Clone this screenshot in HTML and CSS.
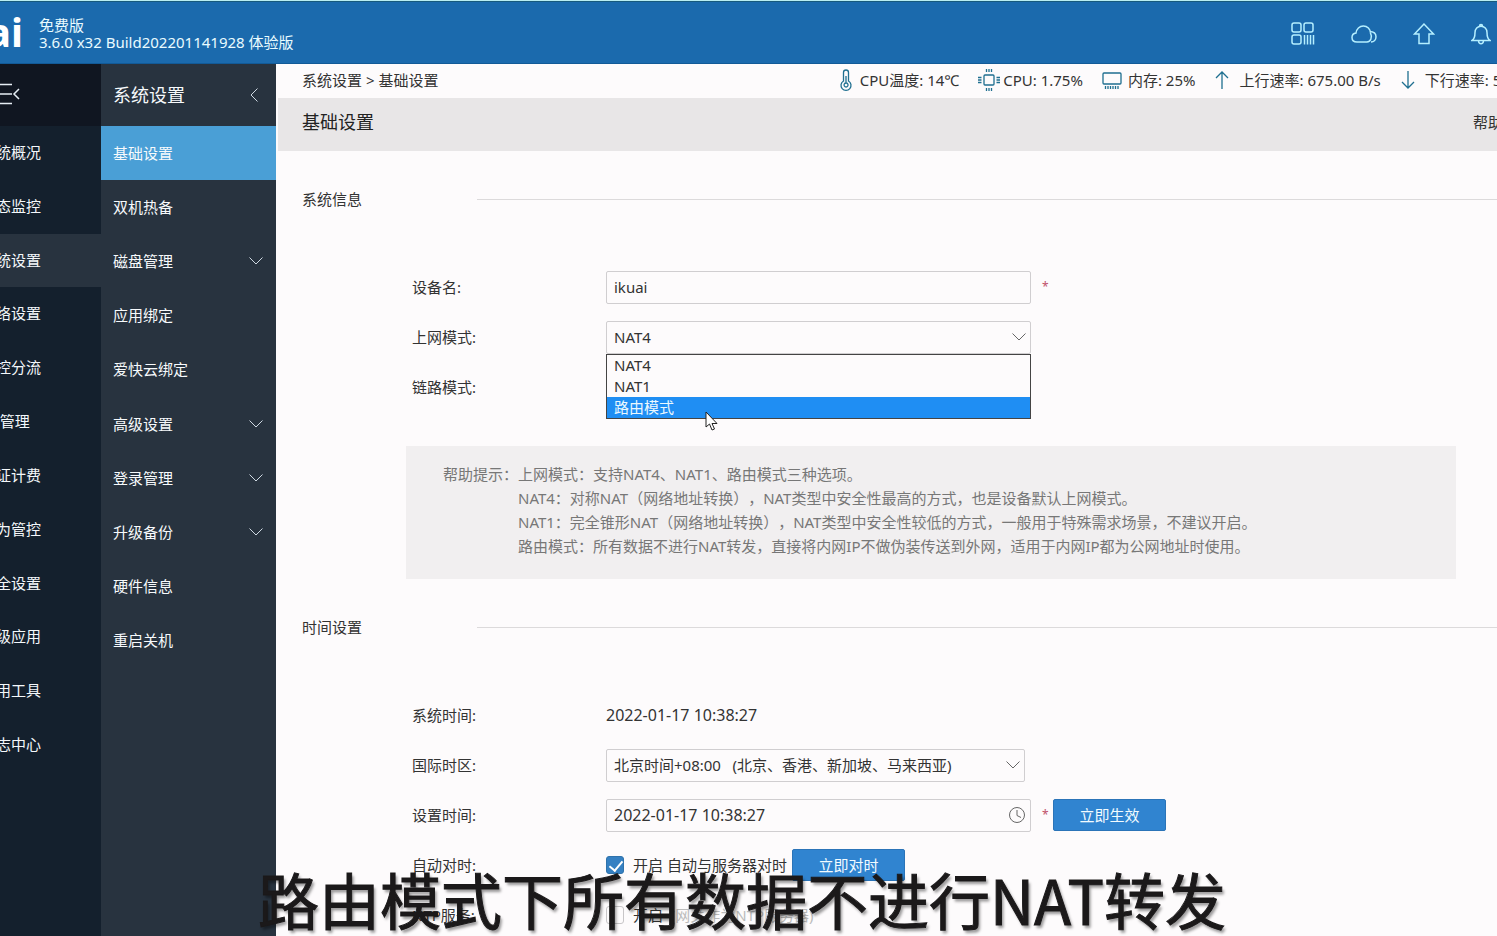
FILE: index.html
```
<!DOCTYPE html>
<html lang="zh-CN">
<head>
<meta charset="utf-8">
<title>基础设置</title>
<link rel="stylesheet" href="styles.css">
</head>
<body>
<header class="topbar">
  <div class="brand">
    <span class="logo">ikuai</span>
    <div class="version"><div>免费版</div><div>3.6.0 x32 Build202201141928 体验版</div></div>
  </div>
  <div class="tools">
    <button class="tool" aria-label="应用"><svg width="24" height="24" viewBox="0 0 24 24"><rect x="1" y="1" width="9" height="9" rx="2"/><rect x="13" y="1" width="9" height="9" rx="2"/><rect x="1" y="13" width="9" height="9" rx="2"/><path d="M13.500 13v9.500M16.500 13v9.500M19.500 13v9.500M22.500 13v9.500"/></svg></button>
    <button class="tool" aria-label="云"><svg width="26" height="24" viewBox="0 0 26 24"><path d="M6 20c-3 0-5-1.800-5-4.500 0-2.400 1.700-4.200 4-4.500C5.500 7 8.500 4 12.300 4c4 0 7.200 3 7.200 7.200 2 3.800.3 8.800-3.500 8.800zM18.500 9.500c4 0 6.500 2 6.500 5.300 0 3-2 5.200-5 5.200"/></svg></button>
    <button class="tool" aria-label="升级"><svg width="22" height="24" viewBox="0 0 22 24"><path d="M11 2 1.500 12H6v9.500h10V12h4.500z"/></svg></button>
    <button class="tool" aria-label="通知"><svg width="20" height="24" viewBox="0 0 20 24"><path d="M8.500 4a1.500 1.500 0 1 1 3 0M1 18.500c2.500-1.500 3-4 3-8C4 7 6.500 4.300 10 4.300S16 7 16 10.500c0 4 .5 6.500 3 8zM7.500 19c.3 3.600 4.700 3.600 5 0"/></svg></button>
  </div>
</header>
<div class="shell">
  <nav class="mainnav" aria-label="主菜单">
    <button class="collapse" aria-label="收起菜单"><svg width="30" height="22" viewBox="0 0 30 22"><path d="M0 1.500h22M0 11h22M0 20.500h22M29 6l-5 5 5 5"/></svg></button>
    <ul class="mainlist">
      <li><a href="#">系统概况</a></li>
      <li><a href="#">状态监控</a></li>
      <li class="on"><a href="#">系统设置</a></li>
      <li><a href="#">网络设置</a></li>
      <li><a href="#">流控分流</a></li>
      <li><a href="#">AC管理</a></li>
      <li><a href="#">认证计费</a></li>
      <li><a href="#">行为管控</a></li>
      <li><a href="#">安全设置</a></li>
      <li><a href="#">高级应用</a></li>
      <li><a href="#">应用工具</a></li>
      <li><a href="#">日志中心</a></li>
    </ul>
  </nav>
  <nav class="subnav" aria-label="系统设置">
    <div class="subhead"><span>系统设置</span><svg width="8" height="14" viewBox="0 0 8 14"><path d="M7.500.5 1 7l6.500 6.500"/></svg></div>
    <ul class="sublist">
      <li class="on"><a href="#">基础设置</a></li>
      <li><a href="#">双机热备</a></li>
      <li><a href="#">磁盘管理<svg width="14" height="8" viewBox="0 0 14 8"><path d="m.5.500 6.500 6.500 6.500-6.500"/></svg></a></li>
      <li><a href="#">应用绑定</a></li>
      <li><a href="#">爱快云绑定</a></li>
      <li><a href="#">高级设置<svg width="14" height="8" viewBox="0 0 14 8"><path d="m.5.500 6.500 6.500 6.500-6.500"/></svg></a></li>
      <li><a href="#">登录管理<svg width="14" height="8" viewBox="0 0 14 8"><path d="m.5.500 6.500 6.500 6.500-6.500"/></svg></a></li>
      <li><a href="#">升级备份<svg width="14" height="8" viewBox="0 0 14 8"><path d="m.5.500 6.500 6.500 6.500-6.500"/></svg></a></li>
      <li><a href="#">硬件信息</a></li>
      <li><a href="#">重启关机</a></li>
    </ul>
  </nav>
  <main class="content">
    <div class="infobar">
      <div class="crumb">系统设置 &gt; 基础设置</div>
      <div class="status">
        <span class="stat s-temp"><svg width="14" height="22" viewBox="0 0 14 22"><path d="M4.500 12V3.500a2.500 2.500 0 0 1 5 0V12a5 5 0 1 1-5 0zM7 7v7M7 14a2 2 0 1 0 .1 0"/></svg>CPU温度: 14℃</span>
        <span class="stat s-cpu"><svg width="22" height="22" viewBox="0 0 22 22"><rect x="6" y="6" width="10" height="10" rx="1"/><path d="M8.500 0v3M11 0v3M13.500 0v3M8.500 19v3M11 19v3M13.500 19v3M0 8.500h3.500M0 11h3.500M0 13.500h3.500M18.500 8.500H22M18.500 11H22M18.500 13.500H22"/></svg>CPU: 1.75%</span>
        <span class="stat s-mem"><svg width="20" height="20" viewBox="0 0 20 20"><rect x="1" y="3" width="18" height="11" rx="1"/><path d="M3.500 16v3M6 16v3M8.500 16v3M11 16v3M13.500 16v3M16 16v3"/></svg>内存: 25%</span>
        <span class="stat s-net"><svg width="14" height="18" viewBox="0 0 14 18"><path d="M7 18V1M1 7l6-6 6 6"/></svg>上行速率: 675.00 B/s</span>
        <span class="stat s-net"><svg width="14" height="18" viewBox="0 0 14 18"><path d="M7 0v17M1 11l6 6 6-6"/></svg>下行速率: 512.00 B/s</span>
      </div>
    </div>
    <div class="titlebar"><h1>基础设置</h1><a href="#">帮助</a></div>

    <section>
      <h2>系统信息</h2>
      <div class="rows">
        <div class="row"><label for="name">设备名:</label><input class="field" id="name" type="text" value="ikuai"><span class="req">*</span></div>
        <div class="row"><label for="mode">上网模式:</label>
          <div class="field-wrap">
            <select class="field" id="mode"><option>NAT4</option><option>NAT1</option><option>路由模式</option></select>
            <svg class="mark" width="14" height="8" viewBox="0 0 14 8"><path d="m.5.500 6.500 6.500 6.500-6.500"/></svg>
            <ul class="menu" role="listbox" aria-label="上网模式"><li role="option">NAT4</li><li role="option">NAT1</li><li role="option" class="picked" aria-selected="true">路由模式</li></ul>
            <svg class="pointer" width="13" height="20" viewBox="0 0 13 20"><path d="M1 1v15l3.500-3 2.500 6 2.500-1-2.500-5.500H12z"/></svg>
          </div>
        </div>
        <div class="row"><span class="label">链路模式:</span></div>
      </div>
      <div class="hint">
        <span>帮助提示：</span>
        <div>
          <p>上网模式：支持NAT4、NAT1、路由模式三种选项。</p>
          <p>NAT4：对称NAT（网络地址转换），NAT类型中安全性最高的方式，也是设备默认上网模式。</p>
          <p>NAT1：完全锥形NAT（网络地址转换），NAT类型中安全性较低的方式，一般用于特殊需求场景，不建议开启。</p>
          <p>路由模式：所有数据不进行NAT转发，直接将内网IP不做伪装传送到外网，适用于内网IP都为公网地址时使用。</p>
        </div>
      </div>
    </section>

    <section>
      <h2>时间设置</h2>
      <div class="rows">
        <div class="row"><span class="label">系统时间:</span><span class="date">2022-01-17 10:38:27</span></div>
        <div class="row"><label for="zone">国际时区:</label>
          <div class="field-wrap zone">
            <select class="field" id="zone"><option>北京时间+08:00 &nbsp; (北京、香港、新加坡、马来西亚)</option></select>
            <svg class="mark" width="14" height="8" viewBox="0 0 14 8"><path d="m.5.500 6.500 6.500 6.500-6.500"/></svg>
          </div>
        </div>
        <div class="row"><label for="time">设置时间:</label>
          <div class="field-wrap">
            <input class="field date" id="time" type="text" value="2022-01-17 10:38:27">
            <svg class="mark" width="18" height="18" viewBox="0 0 18 18"><circle cx="9" cy="9" r="7.500"/><path d="M9 4v5.500l4 2"/></svg>
          </div>
          <span class="req">*</span><button class="btn">立即生效</button>
        </div>
        <div class="row"><span class="label">自动对时:</span><input class="check" id="auto" type="checkbox" checked><label class="inline" for="auto">开启 自动与服务器对时</label><button class="btn near">立即对时</button></div>
        <div class="row"><span class="label">NTP服务:</span><input class="check" id="ntp" type="checkbox"><label class="inline" for="ntp">开启 <span class="note">&nbsp;(网关作为NTP服务器)</span></label></div>
      </div>
    </section>
  </main>
</div>
<div class="caption">路由模式下所有数据不进行NAT转发</div>
</body>
</html>
```
FILE: styles.css
```
* { box-sizing: border-box; }
body {
  margin: 0;
  height: 100vh;
  overflow: hidden;
  display: flex;
  flex-direction: column;
  background: #fdfbfc;
  color: #333;
  font: 15px/24px "Noto Sans", "Noto Sans CJK SC", sans-serif;
  text-spacing-trim: space-all;
}
ul { list-style: none; margin: 0; padding: 0; }
a { color: inherit; text-decoration: none; }
button, input, select { font: inherit; color: inherit; }
svg { fill: none; stroke: currentColor; flex: none; }

.topbar {
  flex: none;
  height: 64px;
  display: flex;
  justify-content: space-between;
  align-items: center;
  padding-right: 6px;
  border-top: 1px solid #b9eef2;
  border-bottom: 1px solid #125a97;
  background: #1b6aad;
  box-shadow: inset 0 1px #175a7d;
  color: #e9fbff;
}
.brand { display: flex; align-items: center; gap: 16px; }
.logo {
  width: 23px;
  display: flex;
  justify-content: flex-end;
  font: 700 40px/40px "Noto Sans", sans-serif;
  color: #fff;
}
.version { line-height: 17px; padding-top: 4px; white-space: nowrap; }
.tools { display: flex; align-items: center; gap: 36px; padding-top: 3px; }
.tool { display: flex; padding: 0; border: 0; background: none; color: #b5efff; }
.tool svg { stroke-width: 1.500; }

.shell { flex: 1; min-height: 0; display: flex; }
.mainnav { flex: none; width: 161px; margin-left: -60px; background: #14202d; color: #f4f8fb; }
.collapse {
  width: 100%;
  height: 62px;
  display: flex;
  align-items: center;
  padding: 0 0 2px 50px;
  border: 0;
  background: #101621;
}
.collapse svg { stroke: #e6eef5; stroke-width: 1.500; }
.mainlist { height: 646px; display: grid; grid-auto-rows: 1fr; }
.mainlist a { height: 100%; display: flex; align-items: center; padding: 0 0 2px 41px; }
.mainlist .on { background: #28333f; }

.subnav { flex: none; width: 175px; background: #28333f; color: #f7fafc; }
.subhead {
  height: 62px;
  display: flex;
  align-items: center;
  justify-content: space-between;
  padding: 0 18px 0 12px;
  font-size: 18px;
}
.sublist { height: 542px; display: grid; grid-auto-rows: 1fr; }
.sublist a { height: 100%; display: flex; align-items: center; justify-content: space-between; padding: 0 13px 1px 12px; }
.sublist .on { background: #4a9fd6; }
.subnav svg { stroke: #cfd9e2; }

.content { flex: 1; min-width: 0; overflow: hidden; }
.infobar { height: 34px; display: flex; justify-content: space-between; align-items: center; padding: 0 0 2px 26px; white-space: nowrap; }
.status { display: flex; margin-right: -69px; }
.stat { display: flex; align-items: center; }
.stat svg { stroke: #1f6f90; stroke-width: 1.300; }
.s-temp { gap: 7px; }
.s-cpu { gap: 3px; margin-left: 19px; }
.s-mem { gap: 6px; margin-left: 19px; }
.s-net { gap: 10px; margin-left: 20px; }
.titlebar {
  height: 53px;
  display: flex;
  justify-content: space-between;
  margin: 0 -6px 0 2px;
  padding: 0 0 6px 24px;
  align-items: center;
  background: #e8e6e7;
}
h1 { margin: 0; font-size: 18px; font-weight: 400; color: #222; }

section { padding: 36px 0 0 26px; }
h2 { display: flex; align-items: center; margin: 0 0 51px; font-size: 15px; font-weight: 400; }
h2::after { content: ""; flex: 1; height: 1px; margin-left: 115px; background: #dcdadb; }
.rows { padding-left: 110px; }
.row { height: 50px; display: flex; align-items: center; white-space: nowrap; }
.row > label:first-child, .label { flex: none; width: 194px; }
.field-wrap { position: relative; width: 425px; }
.zone { width: 419px; }
.field {
  width: 425px;
  height: 33px;
  padding: 0 7px;
  border: 1px solid #d0ced0;
  border-radius: 2px;
  background: #fdfbfc;
  appearance: none;
  outline: 0;
}
.field-wrap .field { display: block; width: 100%; }
.date { font-size: 16px; }
.mark { position: absolute; right: 5px; top: 0; bottom: 0; margin: auto 0; stroke: #666; }
.menu {
  position: absolute;
  z-index: 1;
  top: 33px;
  left: 0;
  right: 0;
  border: 1px solid #444;
  background: #fdfbfc;
  line-height: 21px;
}
.menu li { padding: 0 7px; }
.menu .picked { background: #1f8ef3; color: #eaf8ff; }
.pointer { position: absolute; z-index: 2; left: 99px; top: 90px; fill: #fff; stroke: #222; }
.req { width: 6px; margin: 0 5px 0 11px; font-size: 12px; color: #c0506a; }
.btn {
  width: 113px;
  height: 32px;
  padding: 0;
  border: 1px solid #2b74b8;
  border-radius: 2px;
  background: #3084d0;
  color: #f2fbff;
}
.near { margin-left: 5px; }
.check {
  width: 18px;
  height: 18px;
  margin: 0;
  border: 1px solid #c8c6c8;
  border-radius: 3px;
  appearance: none;
  background: #fdfbfc;
}
.check:checked { border-color: #2f72ab; background: #3580c2; }
.check:checked::after {
  content: "";
  display: block;
  width: 6px;
  height: 11px;
  margin: 1px 0 0 5px;
  border: solid #fff;
  border-width: 0 2px 2px 0;
  transform: rotate(40deg);
}
.inline { margin-left: 9px; }
.note { color: #bbb; }
.hint {
  display: flex;
  margin: 34px 41px 0 104px;
  padding: 16px 0 21px 37px;
  background: #f1eff0;
  color: #777;
  white-space: nowrap;
}
.hint p { margin: 0; }

.caption {
  position: fixed;
  left: 0;
  right: 13px;
  bottom: 1px;
  text-align: center;
  font: 400 61px/72px "Noto Sans CJK SC", sans-serif;
  color: #1b191a;
  -webkit-text-stroke: 1px #1b191a;
  text-shadow: 2px 3px 3px #0006;
  white-space: nowrap;
  pointer-events: none;
}
```
